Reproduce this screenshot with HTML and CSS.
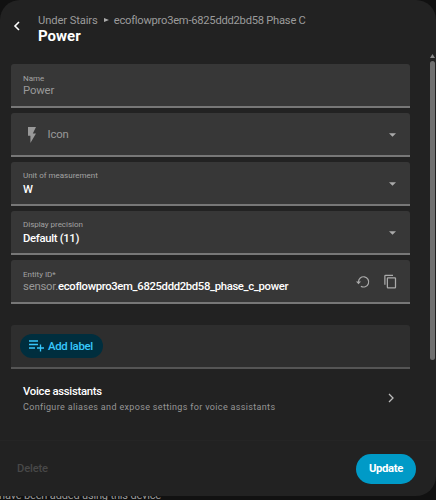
FILE: index.html
```html
<!DOCTYPE html>
<html lang="en">
<head>
<meta charset="utf-8">
<title>Power</title>
<link rel="stylesheet" href="styles.css">
</head>
<body>
<p class="backdrop-text">have been added using this device</p>
<main class="dialog">
  <header class="header">
    <svg class="back" viewBox="0 0 8 10"><path d="M6 1 2 5l4 4"/></svg>
    <div>
      <div class="crumbs"><span class="area">Under Stairs</span><svg class="sep" viewBox="0 0 5 4"><path d="M0 0l5 2-5 2z"/></svg><span class="device">ecoflowpro3em-6825ddd2bd58 Phase C</span></div>
      <h1 class="title">Power</h1>
    </div>
  </header>
  <div class="body">
    <div class="fields">
      <div class="field">
        <div class="text"><span class="label name">Name</span><span class="value muted">Power</span></div>
      </div>
      <div class="field">
        <svg class="flash" viewBox="7 2 10 20"><path d="M7 2v11h3v9l7-12h-4l4-8z"/></svg>
        <span class="placeholder">Icon</span>
        <svg class="arrow" viewBox="0 0 8 4"><path d="M0 0h8L4 4z"/></svg>
      </div>
      <div class="field">
        <div class="text low"><span class="label unit">Unit of measurement</span><span class="value strong">W</span></div>
        <svg class="arrow" viewBox="0 0 8 4"><path d="M0 0h8L4 4z"/></svg>
      </div>
      <div class="field">
        <div class="text low"><span class="label precision">Display precision</span><span class="value strong default">Default (11)</span></div>
        <svg class="arrow" viewBox="0 0 8 4"><path d="M0 0h8L4 4z"/></svg>
      </div>
      <div class="field">
        <div class="text"><span class="label entity">Entity ID*</span><span class="value"><span class="domain">sensor.</span><span class="object">ecoflowpro3em_6825ddd2bd58_phase_c_power</span></span></div>
        <svg class="restore" viewBox="0 0 14 14"><path class="ring" d="M2.5 7A5.1 5.1 0 1 1 4.9 11.2"/><path class="tip" d="M0 6.6h5L2.5 9.2z"/></svg>
        <svg class="copy" viewBox="0 0 24 24"><path d="M19 21H8V7h11m0-2H8a2 2 0 0 0-2 2v14a2 2 0 0 0 2 2h11a2 2 0 0 0 2-2V7a2 2 0 0 0-2-2m-3-4H4a2 2 0 0 0-2 2v14h2V3h12z"/></svg>
      </div>
    </div>
    <div class="labels">
      <button class="chip"><svg class="plus" viewBox="0 0 15 12"><path d="M0 1h9M0 4.5h9M0 8h6M11.5 4.5v7M8 8h7"/></svg><span class="chip-text">Add label</span></button>
    </div>
    <div class="voice">
      <div><div class="voice-title">Voice assistants</div><div class="voice-desc">Configure aliases and expose settings for voice assistants</div></div>
      <svg class="next" viewBox="0 0 6 10"><path d="M1 1l4 4-4 4"/></svg>
    </div>
  </div>
  <footer class="footer">
    <span class="delete">Delete</span>
    <button class="update">Update</button>
  </footer>
  <div class="scrollbar"><svg class="up" viewBox="0 0 5 4"><path d="M2.5 0L5 4H0z"/></svg><div class="thumb"></div></div>
</main>
</body>
</html>
```
FILE: styles.css
```css
* { box-sizing: border-box; }
html, body { height: 100%; }
body { margin: 0; background: #111; overflow: hidden; position: relative; font-family: Roboto, sans-serif; color: #fff; }
svg { display: block; flex: none; }
button { border: 0; font-family: inherit; }
.backdrop-text { position: absolute; left: -1px; top: 489px; margin: 0; font-size: 11px; line-height: 13px; color: #9b9b9b; white-space: nowrap; letter-spacing: -.16px; }
.dialog { position: relative; width: 436px; height: 496px; background: #222; border-radius: 20px; border-bottom-left-radius: 0; display: flex; flex-direction: column; }
.header { height: 64px; padding: 13px 0 0 13px; display: flex; gap: 17px; }
.back { width: 8px; height: 10px; margin-top: 8px; fill: none; stroke: #fff; stroke-width: 1.6; }
.crumbs { display: flex; align-items: center; height: 14px; font-size: 11.2px; color: #9b9b9b; white-space: nowrap; }
.area { letter-spacing: -.1px; }
.device { letter-spacing: -.25px; }
.sep { width: 5px; height: 4px; margin: 0 5px 0 6px; fill: #aaa; }
.title { margin: 0; font-size: 15px; line-height: 18px; font-weight: 700; }
.body { flex: 1; padding-left: 11px; }
.fields { display: grid; gap: 5px; width: 399px; }
.field, .labels { height: 44px; border-radius: 3px 3px 0 0; background: #373737; border-bottom: 2px solid #777; display: flex; align-items: center; padding: 1px 14px 0 12px; }
.text { display: flex; flex-direction: column; flex: 1; }
.low { padding-top: 1px; }
.label { font-size: 8px; line-height: 11px; color: #a3a3a3; }
.value { font-size: 11.3px; line-height: 14px; white-space: nowrap; letter-spacing: -.15px; }
.muted { color: #999; }
.strong { font-weight: 500; line-height: 17px; letter-spacing: -.32px; }
.domain { color: #999; letter-spacing: -.2px; }
.object { font-weight: 500; letter-spacing: -.34px; }
.unit, .precision { line-height: 10px; }
.precision { letter-spacing: -.03px; }
.flash { width: 8px; height: 16px; margin-left: 5px; fill: #999; }
.placeholder { flex: 1; margin-left: 11.5px; font-size: 11.3px; letter-spacing: -.15px; color: #999; }
.arrow { width: 7px; height: 4px; fill: #aaa; margin-right: .5px; }
.restore { width: 14px; height: 14px; margin-right: 13px; }
.ring { fill: none; stroke: #aaa; stroke-width: 1.2; }
.tip { fill: #aaa; }
.copy { width: 15px; height: 15px; fill: #aaa; margin-right: -2px; }
.labels { width: 399px; margin-top: 21px; background: #2e2e2e; border-color: #555; padding: 0 0 0 9px; }
.chip { display: flex; align-items: center; width: 83px; height: 24px; padding: 0 0 0 9px; border-radius: 12px; background: #002e3e; color: #37c8fd; }
.plus { width: 15px; height: 12px; fill: none; stroke: #37c8fd; stroke-width: 1.3; }
.chip-text { margin-left: 4px; font-size: 11.4px; font-weight: 500; letter-spacing: -.3px; white-space: nowrap; }
.voice { display: flex; justify-content: space-between; width: 399px; padding: 14px 16px 0 12px; }
.voice-title { font-size: 11.3px; line-height: 17px; font-weight: 500; letter-spacing: -.27px; }
.voice-desc { font-size: 9px; line-height: 15px; color: #969696; letter-spacing: .34px; white-space: nowrap; }
.next { width: 6px; height: 10px; margin-top: 10px; fill: none; stroke: #bbb; stroke-width: 1.3; }
.footer { height: 56px; display: flex; justify-content: space-between; align-items: center; padding: 0 20px 0 17px; border-top: 1px solid #252525; }
.delete { font-size: 11.2px; color: #484848; font-weight: 500; letter-spacing: -.15px; }
.update { width: 60px; height: 30px; padding: 0; border-radius: 15px; background: #009ac7; color: #fff; font-size: 11.3px; font-weight: 700; letter-spacing: -.35px; }
.scrollbar { position: absolute; left: 430px; top: 54px; width: 5px; }
.up { width: 5px; height: 4px; fill: #888; }
.thumb { width: 5px; height: 299px; margin-top: 3px; border-radius: 3px; background: #707070; }
```
